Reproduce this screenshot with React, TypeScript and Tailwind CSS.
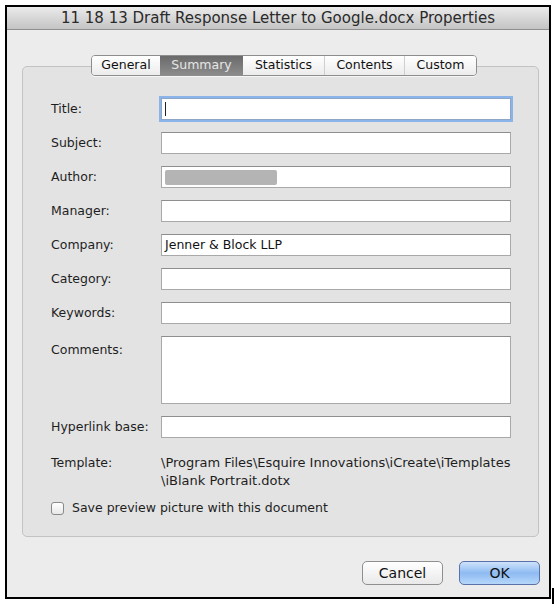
import React from 'react';

const FONT = { fontFamily: '"DejaVu Sans", "Liberation Sans", sans-serif' };

const TABS = [
  { label: 'General', w: 'w-[68px]' },
  { label: 'Summary', w: 'w-[83px]' },
  { label: 'Statistics', w: 'w-[81px]' },
  { label: 'Contents', w: 'w-[80px]' },
  { label: 'Custom', w: 'w-[72px]' },
];

const FIELDS = ['Subject:', 'Author:', 'Manager:', 'Company:', 'Category:', 'Keywords:'];

function Field({ label, children, tall }: { label: string; children?: React.ReactNode; tall?: boolean }) {
  return (
    <div className="flex items-start">
      <div className={`w-[110px] text-[12.5px] text-[#1e1e1e] ${tall ? 'pt-[5px]' : 'leading-[22px]'}`}>{label}</div>
      <div
        className={`w-[350px] ${tall ? 'h-[68px]' : 'h-[22px]'} bg-white border border-[#a9a9a9] border-t-[#8e8e8e] flex items-center px-[3px] text-[12.5px] text-[#111]`}
      >
        {children}
      </div>
    </div>
  );
}

export default function App() {
  return (
    <div className="w-[557px] h-[604px] bg-white relative" style={FONT}>
      <div className="pt-[5px] pl-[5px]">
        <div className="w-[546px] h-[594px] border-2 border-black bg-[#ececec] flex flex-col">
          {/* title bar */}
          <div className="h-[23px] bg-gradient-to-b from-[#ebebeb] to-[#c4c4c4] border-b border-[#8f8f8f] flex items-center justify-center text-[15px] text-[#2a2a2a]">
            11 18 13 Draft Response Letter to Google.docx Properties
          </div>

          {/* tab group */}
          <div className="relative mt-[36px] ml-[15px] w-[517px] h-[471px] bg-[#e3e3e3] border border-[#c3c3c3] rounded-[5px]">
            <div className="absolute -top-[12px] left-[68px] flex h-[21px] rounded-[4px] border border-[#8d8d8d] overflow-hidden shadow-[0_1px_0_rgba(255,255,255,0.7)]">
              {TABS.map((t, i) => {
                const active = t.label === 'Summary';
                return (
                  <div
                    key={t.label}
                    className={`${t.w} flex items-center justify-center text-[12.5px] ${
                      active
                        ? 'bg-gradient-to-b from-[#6a6a6a] to-[#8c8c8c] text-[#e6e6e6]'
                        : 'bg-gradient-to-b from-white to-[#ececec] text-[#111]'
                    } ${i > 0 && !active && TABS[i - 1].label !== 'Summary' ? 'border-l border-[#cfcfcf]' : ''}`}
                  >
                    {t.label}
                  </div>
                );
              })}
            </div>

            <div className="pt-[31px] pl-[28px] flex flex-col">
              <div className="flex flex-col gap-[12px]">
                <div className="flex items-start">
                  <div className="w-[110px] text-[12.5px] text-[#1e1e1e] leading-[22px]">Title:</div>
                  <div className="w-[350px] h-[22px] bg-white border border-[#8da6c8] shadow-[0_0_0_2px_#8bb4ea] flex items-center px-[3px]">
                    <div className="w-px h-[14px] bg-[#222]" />
                  </div>
                </div>
                {FIELDS.map((f) => (
                  <Field key={f} label={f}>
                    {f === 'Author:' && <div className="w-[112px] h-[15px] bg-[#b4b4b4] rounded-[2px]" />}
                    {f === 'Company:' && 'Jenner & Block LLP'}
                  </Field>
                ))}
                <Field label="Comments:" tall />
                <Field label="Hyperlink base:" />
              </div>

              <div className="flex items-start mt-[16px] text-[#1e1e1e] leading-[18px]">
                <div className="w-[110px] text-[12.5px]">Template:</div>
                <div className="text-[13px]">
                  <div>\Program Files\Esquire Innovations\iCreate\iTemplates</div>
                  <div>\iBlank Portrait.dotx</div>
                </div>
              </div>

              <div className="flex items-center gap-[8px] mt-[9px] text-[12.5px] text-[#1e1e1e]">
                <div className="w-[13px] h-[13px] rounded-[3px] border border-[#8a8a8a] bg-gradient-to-b from-white to-[#e8e8e8]" />
                Save preview picture with this document
              </div>
            </div>
          </div>

          {/* buttons */}
          <div className="flex justify-end gap-[16px] mt-[24px] pr-[9px]">
            <div className="w-[81px] h-[24px] rounded-[5px] border border-[#8f8f8f] bg-gradient-to-b from-white to-[#e9e9e9] flex items-center justify-center text-[14px] text-[#111]">
              Cancel
            </div>
            <div className="w-[81px] h-[24px] rounded-[5px] border border-[#5a72a8] bg-gradient-to-b from-[#cfe2fb] via-[#8ebbf2] to-[#b5d6fa] flex items-center justify-center text-[14px] text-[#111]">
              OK
            </div>
          </div>
        </div>
      </div>
      <div className="absolute left-[552px] top-[588px] w-[2px] h-[16px] bg-black" />
    </div>
  );
}
